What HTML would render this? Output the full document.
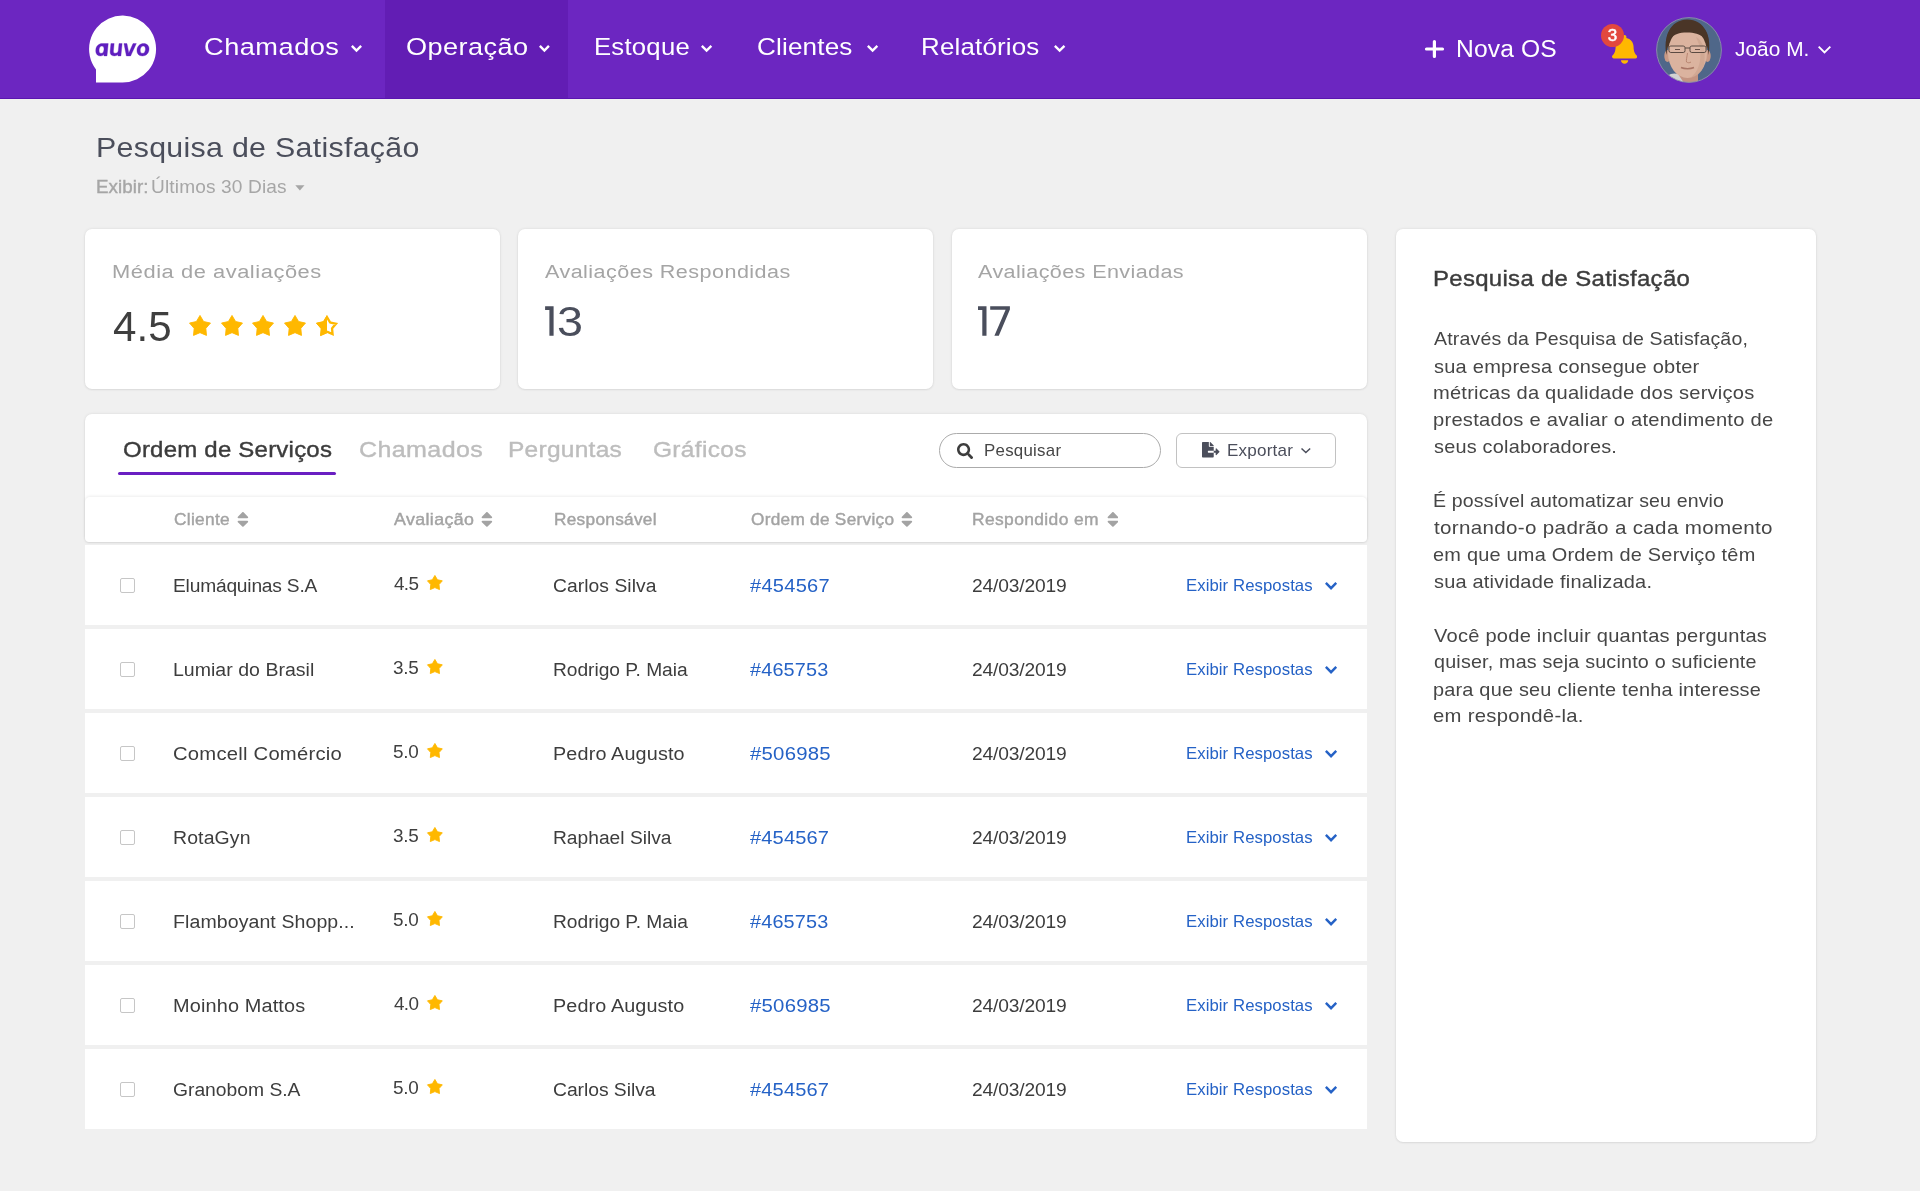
<!DOCTYPE html><html><head><meta charset="utf-8"><title>Pesquisa de Satisfação</title><style>html,body{margin:0;padding:0;width:1920px;height:1191px;overflow:hidden;background:#f0f0f0;}body{position:relative;font-family:"Liberation Sans",sans-serif;}.tx{position:absolute;white-space:nowrap;line-height:normal;will-change:transform;}.box{position:absolute;background:#fff;}</style></head><body><div style="position:absolute;left:0;top:0;width:1920px;height:99px;background:#6c26c1"></div><div style="position:absolute;left:385px;top:0;width:183px;height:99px;background:#621db4"></div><div style="position:absolute;left:0;top:98px;width:1920px;height:1px;background:#5a15b0"></div><svg style="position:absolute;left:80px;top:10px;width:90px;height:80px" viewBox="80 10 90 80"><path fill="#fff" d="M96,69.4 L96,82.5 L122.5,82.5 A33.5,33.5 0 1 0 96,69.4 Z"/><g transform="translate(94 40) matrix(1 0 -0.1 1 1.59 0)" fill="#5f1ebf" fill-rule="evenodd" stroke="#5f1ebf" stroke-width="0.35"><path d="M7,3.6 L13,3.6 L13,15.9 L9.9,15.9 L9.9,14.3 C9.0,15.3 7.9,15.9 6.4,15.9 C3.1,15.9 1.2,13.3 1.2,9.75 C1.2,6.0 3.6,3.6 7,3.6 Z M6.9,6.0 C5.3,6.0 4.45,7.6 4.45,9.65 C4.45,11.8 5.3,13.3 6.9,13.3 C8.5,13.3 9.35,11.8 9.35,9.65 C9.35,7.6 8.5,6.0 6.9,6.0 Z"/><path d="M15.7,3.6 H18.9 V10.9 C18.9,12.5 19.7,13.2 21.1,13.2 C22.8,13.2 23.8,12.0 23.8,10.2 V3.6 H26.9 V15.9 H23.9 V14.5 C23.1,15.4 21.9,15.9 20.3,15.9 C17.3,15.9 15.7,14.2 15.7,11.3 Z"/><path d="M28.7,3.6 H31.7 L34.5,12.9 L37.8,3.6 H41.1 L36.6,15.9 H32.4 Z"/><path d="M48.4,3.6 C52.2,3.6 54.4,6.2 54.4,9.75 C54.4,13.3 52.2,15.9 48.4,15.9 C44.6,15.9 42.4,13.3 42.4,9.75 C42.4,6.2 44.6,3.6 48.4,3.6 Z M48.2,6.0 C46.6,6.0 45.6,7.5 45.6,9.65 C45.6,11.8 46.6,13.3 48.2,13.3 C49.8,13.3 50.8,11.8 50.8,9.65 C50.8,7.5 49.8,6.0 48.2,6.0 Z"/></g></svg><svg style="position:absolute;left:348.00px;top:42.00px;width:17.00px;height:13.20px" viewBox="0 0 17.00 13.20"><polyline points="3.85,3.85 8.50,8.50 13.15,3.85" fill="none" stroke="#fff" stroke-width="2.4" stroke-linecap="butt" stroke-linejoin="miter" stroke-miterlimit="10"/></svg><svg style="position:absolute;left:536.40px;top:42.00px;width:16.80px;height:13.20px" viewBox="0 0 16.80 13.20"><polyline points="3.86,3.84 8.40,8.48 12.94,3.84" fill="none" stroke="#fff" stroke-width="2.4" stroke-linecap="butt" stroke-linejoin="miter" stroke-miterlimit="10"/></svg><svg style="position:absolute;left:697.80px;top:42.00px;width:17.20px;height:13.20px" viewBox="0 0 17.20 13.20"><polyline points="3.84,3.86 8.60,8.52 13.36,3.86" fill="none" stroke="#fff" stroke-width="2.4" stroke-linecap="butt" stroke-linejoin="miter" stroke-miterlimit="10"/></svg><svg style="position:absolute;left:863.90px;top:42.00px;width:17.20px;height:13.20px" viewBox="0 0 17.20 13.20"><polyline points="3.84,3.86 8.60,8.52 13.36,3.86" fill="none" stroke="#fff" stroke-width="2.4" stroke-linecap="butt" stroke-linejoin="miter" stroke-miterlimit="10"/></svg><svg style="position:absolute;left:1050.90px;top:42.00px;width:17.30px;height:13.20px" viewBox="0 0 17.30 13.20"><polyline points="3.84,3.86 8.65,8.53 13.46,3.86" fill="none" stroke="#fff" stroke-width="2.4" stroke-linecap="butt" stroke-linejoin="miter" stroke-miterlimit="10"/></svg><svg style="position:absolute;left:1423px;top:38px;width:23px;height:22px" viewBox="0 0 23 22"><path d="M11.4,3.5 V18.5 M3.5,11 H19.5" stroke="#fff" stroke-width="3.2" stroke-linecap="round"/></svg><svg style="position:absolute;left:1611.90px;top:35.20px;width:25.20px;height:28.80px;" viewBox="0 0 448 512" preserveAspectRatio="none"><path fill="#ffb800" d="M439.39 362.29c-19.32-20.76-55.47-51.99-55.47-154.29 0-77.7-54.48-139.9-127.94-155.16V32c0-17.670-14.32-32-31.98-32s-31.98 14.33-31.98 32v20.84C118.56 68.1 64.08 130.3 64.08 208c0 102.3-36.15 133.53-55.47 154.29-6 6.45-8.66 14.16-8.61 21.71.11 16.4 12.98 32 32.1 32h383.8c19.12 0 32-15.6 32.1-32 .05-7.55-2.61-15.27-8.61-21.71z"/><path fill="#ffb800" d="M224 512c35.32 0 63.97-28.65 63.97-64H160.03c0 35.35 28.65 64 63.97 64z"/></svg><div style="position:absolute;left:1601px;top:24px;width:23px;height:23px;border-radius:50%;background:#e2483e"></div><svg style="position:absolute;left:1655.5px;top:16.5px;width:66px;height:66px" viewBox="0 0 66 66"><defs><clipPath id="av"><circle cx="33" cy="33" r="32.5"/></clipPath></defs><g clip-path="url(#av)"><rect width="66" height="66" fill="#4f6789"/><rect x="21" y="50" width="21" height="18" fill="#c49482"/><path d="M6,66 C10,58 16,55 22,57 L28,66 Z" fill="#d2d2d2"/><path d="M10,58 L17,66 H6 Z" fill="#2c3444"/><ellipse cx="31.5" cy="24" rx="21" ry="20" fill="#4a3527"/><ellipse cx="11.5" cy="39" rx="3.2" ry="6" fill="#c99a86"/><ellipse cx="51.5" cy="39" rx="3.2" ry="6" fill="#c99a86"/><ellipse cx="31.5" cy="36" rx="19.5" ry="25" fill="#dbb39f"/><path d="M40,20 C48,24 50,36 48,48 C46,56 40,60 34,61 C42,56 46,44 44,30 Z" fill="#c9a08c" opacity="0.6"/><path d="M10.5,38 C7,20 14,3 31,2.5 C49,2.5 56,20 52.5,38 C52,31 51,25 48,21 C44,17 38,15.5 31,15.5 C23,15.5 18,17.5 15,21 C12,25 11,31 10.5,38 Z" fill="#4a3527"/><rect x="13" y="29" width="16" height="6.5" rx="1.8" fill="#e2c0ae" fill-opacity="0.35" stroke="#5b4a42" stroke-width="1"/><rect x="34" y="29" width="16" height="6.5" rx="1.8" fill="#e2c0ae" fill-opacity="0.35" stroke="#5b4a42" stroke-width="1"/><path d="M29,31 H34" stroke="#5b4a42" stroke-width="1"/><path d="M19,32.5 H24 M39,32.5 H44" stroke="#6a5048" stroke-width="1.2"/><path d="M31.5,36 C31,40 30,43 30.5,45 C32,46 33.5,46 35,45" stroke="#b88672" stroke-width="1" fill="none"/><path d="M25,50.5 C28.5,52 34.5,52 38,50.5" stroke="#a97565" stroke-width="1.5" fill="none"/></g><circle cx="33" cy="33" r="32.4" fill="none" stroke="#8f8fae" stroke-width="0.9"/></svg><svg style="position:absolute;left:1815.00px;top:42.90px;width:19.00px;height:13.85px" viewBox="0 0 19.00 13.85"><polyline points="3.67,3.67 9.50,9.51 15.33,3.67" fill="none" stroke="#fff" stroke-width="1.9" stroke-linecap="butt" stroke-linejoin="miter" stroke-miterlimit="10"/></svg><svg style="position:absolute;left:295px;top:185px;width:10px;height:6px" viewBox="0 0 10 6"><path d="M0.3,0.2 H9.5 L4.9,5.6 Z" fill="#a6a6a6"/></svg><div class="box" style="left:85px;top:229px;width:415px;height:160px;border-radius:7px;box-shadow:0 0 3px rgba(0,0,0,0.10),0 1px 2px rgba(0,0,0,0.05);"></div><div class="box" style="left:518px;top:229px;width:415px;height:160px;border-radius:7px;box-shadow:0 0 3px rgba(0,0,0,0.10),0 1px 2px rgba(0,0,0,0.05);"></div><div class="box" style="left:952px;top:229px;width:415px;height:160px;border-radius:7px;box-shadow:0 0 3px rgba(0,0,0,0.10),0 1px 2px rgba(0,0,0,0.05);"></div><svg style="position:absolute;left:186.75px;top:313.00px;width:26.00px;height:24.81px" viewBox="0 0 26.00 24.81"><polygon points="13.00,2.45 16.61,8.53 23.50,10.08 18.84,15.39 19.49,22.43 13.00,19.64 6.51,22.43 7.16,15.39 2.50,10.08 9.39,8.53" fill="#ffb800" stroke="#ffb800" stroke-width="0.9" stroke-linejoin="round"/></svg><svg style="position:absolute;left:218.60px;top:313.00px;width:26.00px;height:24.81px" viewBox="0 0 26.00 24.81"><polygon points="13.00,2.45 16.61,8.53 23.50,10.08 18.84,15.39 19.49,22.43 13.00,19.64 6.51,22.43 7.16,15.39 2.50,10.08 9.39,8.53" fill="#ffb800" stroke="#ffb800" stroke-width="0.9" stroke-linejoin="round"/></svg><svg style="position:absolute;left:250.25px;top:313.00px;width:26.00px;height:24.81px" viewBox="0 0 26.00 24.81"><polygon points="13.00,2.45 16.61,8.53 23.50,10.08 18.84,15.39 19.49,22.43 13.00,19.64 6.51,22.43 7.16,15.39 2.50,10.08 9.39,8.53" fill="#ffb800" stroke="#ffb800" stroke-width="0.9" stroke-linejoin="round"/></svg><svg style="position:absolute;left:282.00px;top:313.00px;width:26.00px;height:24.81px" viewBox="0 0 26.00 24.81"><polygon points="13.00,2.45 16.61,8.53 23.50,10.08 18.84,15.39 19.49,22.43 13.00,19.64 6.51,22.43 7.16,15.39 2.50,10.08 9.39,8.53" fill="#ffb800" stroke="#ffb800" stroke-width="0.9" stroke-linejoin="round"/></svg><svg style="position:absolute;left:313.60px;top:313.00px;width:26.20px;height:25.00px" viewBox="0 0 26.20 25.00"><defs><clipPath id="hs3156a"><rect x="0" y="0" width="13.10" height="25.00"/></clipPath><clipPath id="hs3156b"><polygon points="13.55,2.45 17.35,8.84 24.60,10.48 19.70,16.07 20.38,23.47 13.55,20.53 6.72,23.47 7.40,16.07 2.50,10.48 9.75,8.84" transform="translate(-0.45 -0.42)"/></clipPath></defs><polygon points="13.10,2.45 16.74,8.58 23.70,10.15 19.00,15.52 19.65,22.62 13.10,19.80 6.55,22.62 7.20,15.52 2.50,10.15 9.46,8.58" fill="#ffb800" stroke="#ffb800" stroke-width="0.9" stroke-linejoin="round" clip-path="url(#hs3156a)"/><polygon points="13.10,2.45 16.74,8.58 23.70,10.15 19.00,15.52 19.65,22.62 13.10,19.80 6.55,22.62 7.20,15.52 2.50,10.15 9.46,8.58" fill="none" stroke="#ffb800" stroke-width="4.2" stroke-linejoin="round" clip-path="url(#hs3156b)"/></svg><svg style="position:absolute;left:540px;top:300px;width:480px;height:40px" viewBox="540 300 480 40" fill="#4a4e5c"><path d="M545.1,306.2 H553.6 V335.8 H549.4 V309.9 H545.1 Z"/><path d="M978.0,306.2 H986.5 V335.8 H982.3 V309.9 H978.0 Z"/><path d="M990.2,306.2 H1009.9 V309.4 L998.8,335.8 H994.4 L1005.6,309.7 H990.2 Z"/></svg><div class="box" style="left:85px;top:414px;width:1282px;height:128px;border-radius:7px 7px 4px 4px;box-shadow:0 0 3px rgba(0,0,0,0.10),0 1px 2px rgba(0,0,0,0.05);"></div><div class="box" style="left:85px;top:497px;width:1282px;height:45px;border-radius:5px;box-shadow:0 -1px 3px rgba(0,0,0,0.07)"></div><div style="position:absolute;left:118px;top:472px;width:218px;height:3px;border-radius:2px;background:#6a1fc2"></div><div style="position:absolute;left:939px;top:433px;width:220px;height:33px;border:1px solid #ababab;border-radius:18px;background:#fff"></div><svg style="position:absolute;left:956.9px;top:442.5px;width:16.2px;height:16.2px;" viewBox="0 0 512 512" preserveAspectRatio="none"><path fill="#3d3d3d" d="M505 442.7L405.3 343c-4.5-4.5-10.6-7-17-7H372c27.6-35.3 44-79.7 44-128C416 93.1 322.9 0 208 0S0 93.1 0 208s93.1 208 208 208c48.3 0 92.7-16.4 128-44v16.3c0 6.4 2.5 12.5 7 17l99.7 99.7c9.4 9.4 24.6 9.4 33.9 0l28.3-28.3c9.4-9.4 9.4-24.6.1-34zM208 336c-70.7 0-128-57.2-128-128 0-70.7 57.2-128 128-128 70.7 0 128 57.2 128 128 0 70.7-57.2 128-128 128z"/></svg><div style="position:absolute;left:1176px;top:433px;width:158px;height:33px;border:1px solid #c2c2c2;border-radius:6px;background:#fff"></div><svg style="position:absolute;left:1202px;top:442.2px;width:17.6px;height:15.6px;" viewBox="0 0 576 512" preserveAspectRatio="none"><path fill="#4b4e5b" d="M384 121.9c0-6.3-2.5-12.4-7-16.9L279.1 7c-4.5-4.5-10.6-7-17-7H256v128h128zM571 308l-95.7-96.4c-10.1-10.1-27.4-3-27.4 11.3V288h-64v64h64v65.2c0 14.3 17.3 21.4 27.4 11.3L571 332c6.6-6.6 6.6-17.4 0-24zm-379 28v-32c0-8.8 7.2-16 16-16h176V160H248c-13.2 0-24-10.8-24-24V0H24C10.7 0 0 10.7 0 24v464c0 13.3 10.7 24 24 24h336c13.3 0 24-10.7 24-24V352H208c-8.8 0-16-7.2-16-16z"/></svg><svg style="position:absolute;left:1298.10px;top:445.40px;width:15.70px;height:11.60px" viewBox="0 0 15.70 11.60"><polyline points="3.51,3.55 7.85,7.58 12.19,3.55" fill="none" stroke="#4b4e5b" stroke-width="1.5" stroke-linecap="butt" stroke-linejoin="miter" stroke-miterlimit="10"/></svg><svg style="position:absolute;left:237.27px;top:509.79px;width:11.82px;height:18.91px;" viewBox="0 0 320 512" preserveAspectRatio="none"><path fill="#a3a3a3" d="M41 288h238c21.4 0 32.1 25.9 17 41L177 448c-9.4 9.4-24.6 9.4-33.9 0L24 329c-15.1-15.1-4.4-41 17-41zm255-105L177 64c-9.4-9.4-24.6-9.4-33.9 0L24 183c-15.1 15.1-4.4 41 17 41h238c21.4 0 32.1-25.9 17-41z"/></svg><svg style="position:absolute;left:481.37px;top:509.79px;width:11.82px;height:18.91px;" viewBox="0 0 320 512" preserveAspectRatio="none"><path fill="#a3a3a3" d="M41 288h238c21.4 0 32.1 25.9 17 41L177 448c-9.4 9.4-24.6 9.4-33.9 0L24 329c-15.1-15.1-4.4-41 17-41zm255-105L177 64c-9.4-9.4-24.6-9.4-33.9 0L24 183c-15.1 15.1-4.4 41 17 41h238c21.4 0 32.1-25.9 17-41z"/></svg><svg style="position:absolute;left:901.27px;top:509.79px;width:11.82px;height:18.91px;" viewBox="0 0 320 512" preserveAspectRatio="none"><path fill="#a3a3a3" d="M41 288h238c21.4 0 32.1 25.9 17 41L177 448c-9.4 9.4-24.6 9.4-33.9 0L24 329c-15.1-15.1-4.4-41 17-41zm255-105L177 64c-9.4-9.4-24.6-9.4-33.9 0L24 183c-15.1 15.1-4.4 41 17 41h238c21.4 0 32.1-25.9 17-41z"/></svg><svg style="position:absolute;left:1106.67px;top:509.79px;width:11.82px;height:18.91px;" viewBox="0 0 320 512" preserveAspectRatio="none"><path fill="#a3a3a3" d="M41 288h238c21.4 0 32.1 25.9 17 41L177 448c-9.4 9.4-24.6 9.4-33.9 0L24 329c-15.1-15.1-4.4-41 17-41zm255-105L177 64c-9.4-9.4-24.6-9.4-33.9 0L24 183c-15.1 15.1-4.4 41 17 41h238c21.4 0 32.1-25.9 17-41z"/></svg><div class="box" style="left:85px;top:545px;width:1282px;height:80px"></div><div style="position:absolute;left:120px;top:577.5px;width:13px;height:13px;border:1px solid #c6c6c6;border-radius:2px;background:#fff"></div><svg style="position:absolute;left:424.70px;top:573.00px;width:19.80px;height:18.95px" viewBox="0 0 19.80 18.95"><polygon points="9.90,2.45 12.45,6.74 17.32,7.84 14.03,11.60 14.49,16.57 9.90,14.60 5.31,16.57 5.77,11.60 2.48,7.84 7.35,6.74" fill="#ffb800" stroke="#ffb800" stroke-width="0.9" stroke-linejoin="round"/></svg><svg style="position:absolute;left:1321.60px;top:578.90px;width:18.10px;height:13.90px" viewBox="0 0 18.10 13.90"><polyline points="3.86,3.84 9.05,9.18 14.24,3.84" fill="none" stroke="#2562c6" stroke-width="2.4" stroke-linecap="butt" stroke-linejoin="miter" stroke-miterlimit="10"/></svg><div class="box" style="left:85px;top:629px;width:1282px;height:80px"></div><div style="position:absolute;left:120px;top:661.5px;width:13px;height:13px;border:1px solid #c6c6c6;border-radius:2px;background:#fff"></div><svg style="position:absolute;left:424.70px;top:657.00px;width:19.80px;height:18.95px" viewBox="0 0 19.80 18.95"><polygon points="9.90,2.45 12.45,6.74 17.32,7.84 14.03,11.60 14.49,16.57 9.90,14.60 5.31,16.57 5.77,11.60 2.48,7.84 7.35,6.74" fill="#ffb800" stroke="#ffb800" stroke-width="0.9" stroke-linejoin="round"/></svg><svg style="position:absolute;left:1321.60px;top:662.90px;width:18.10px;height:13.90px" viewBox="0 0 18.10 13.90"><polyline points="3.86,3.84 9.05,9.18 14.24,3.84" fill="none" stroke="#2562c6" stroke-width="2.4" stroke-linecap="butt" stroke-linejoin="miter" stroke-miterlimit="10"/></svg><div class="box" style="left:85px;top:713px;width:1282px;height:80px"></div><div style="position:absolute;left:120px;top:745.5px;width:13px;height:13px;border:1px solid #c6c6c6;border-radius:2px;background:#fff"></div><svg style="position:absolute;left:424.70px;top:741.00px;width:19.80px;height:18.95px" viewBox="0 0 19.80 18.95"><polygon points="9.90,2.45 12.45,6.74 17.32,7.84 14.03,11.60 14.49,16.57 9.90,14.60 5.31,16.57 5.77,11.60 2.48,7.84 7.35,6.74" fill="#ffb800" stroke="#ffb800" stroke-width="0.9" stroke-linejoin="round"/></svg><svg style="position:absolute;left:1321.60px;top:746.90px;width:18.10px;height:13.90px" viewBox="0 0 18.10 13.90"><polyline points="3.86,3.84 9.05,9.18 14.24,3.84" fill="none" stroke="#2562c6" stroke-width="2.4" stroke-linecap="butt" stroke-linejoin="miter" stroke-miterlimit="10"/></svg><div class="box" style="left:85px;top:797px;width:1282px;height:80px"></div><div style="position:absolute;left:120px;top:829.5px;width:13px;height:13px;border:1px solid #c6c6c6;border-radius:2px;background:#fff"></div><svg style="position:absolute;left:424.70px;top:825.00px;width:19.80px;height:18.95px" viewBox="0 0 19.80 18.95"><polygon points="9.90,2.45 12.45,6.74 17.32,7.84 14.03,11.60 14.49,16.57 9.90,14.60 5.31,16.57 5.77,11.60 2.48,7.84 7.35,6.74" fill="#ffb800" stroke="#ffb800" stroke-width="0.9" stroke-linejoin="round"/></svg><svg style="position:absolute;left:1321.60px;top:830.90px;width:18.10px;height:13.90px" viewBox="0 0 18.10 13.90"><polyline points="3.86,3.84 9.05,9.18 14.24,3.84" fill="none" stroke="#2562c6" stroke-width="2.4" stroke-linecap="butt" stroke-linejoin="miter" stroke-miterlimit="10"/></svg><div class="box" style="left:85px;top:881px;width:1282px;height:80px"></div><div style="position:absolute;left:120px;top:913.5px;width:13px;height:13px;border:1px solid #c6c6c6;border-radius:2px;background:#fff"></div><svg style="position:absolute;left:424.70px;top:909.00px;width:19.80px;height:18.95px" viewBox="0 0 19.80 18.95"><polygon points="9.90,2.45 12.45,6.74 17.32,7.84 14.03,11.60 14.49,16.57 9.90,14.60 5.31,16.57 5.77,11.60 2.48,7.84 7.35,6.74" fill="#ffb800" stroke="#ffb800" stroke-width="0.9" stroke-linejoin="round"/></svg><svg style="position:absolute;left:1321.60px;top:914.90px;width:18.10px;height:13.90px" viewBox="0 0 18.10 13.90"><polyline points="3.86,3.84 9.05,9.18 14.24,3.84" fill="none" stroke="#2562c6" stroke-width="2.4" stroke-linecap="butt" stroke-linejoin="miter" stroke-miterlimit="10"/></svg><div class="box" style="left:85px;top:965px;width:1282px;height:80px"></div><div style="position:absolute;left:120px;top:997.5px;width:13px;height:13px;border:1px solid #c6c6c6;border-radius:2px;background:#fff"></div><svg style="position:absolute;left:424.70px;top:993.00px;width:19.80px;height:18.95px" viewBox="0 0 19.80 18.95"><polygon points="9.90,2.45 12.45,6.74 17.32,7.84 14.03,11.60 14.49,16.57 9.90,14.60 5.31,16.57 5.77,11.60 2.48,7.84 7.35,6.74" fill="#ffb800" stroke="#ffb800" stroke-width="0.9" stroke-linejoin="round"/></svg><svg style="position:absolute;left:1321.60px;top:998.90px;width:18.10px;height:13.90px" viewBox="0 0 18.10 13.90"><polyline points="3.86,3.84 9.05,9.18 14.24,3.84" fill="none" stroke="#2562c6" stroke-width="2.4" stroke-linecap="butt" stroke-linejoin="miter" stroke-miterlimit="10"/></svg><div class="box" style="left:85px;top:1049px;width:1282px;height:80px"></div><div style="position:absolute;left:120px;top:1081.5px;width:13px;height:13px;border:1px solid #c6c6c6;border-radius:2px;background:#fff"></div><svg style="position:absolute;left:424.70px;top:1077.00px;width:19.80px;height:18.95px" viewBox="0 0 19.80 18.95"><polygon points="9.90,2.45 12.45,6.74 17.32,7.84 14.03,11.60 14.49,16.57 9.90,14.60 5.31,16.57 5.77,11.60 2.48,7.84 7.35,6.74" fill="#ffb800" stroke="#ffb800" stroke-width="0.9" stroke-linejoin="round"/></svg><svg style="position:absolute;left:1321.60px;top:1082.90px;width:18.10px;height:13.90px" viewBox="0 0 18.10 13.90"><polyline points="3.86,3.84 9.05,9.18 14.24,3.84" fill="none" stroke="#2562c6" stroke-width="2.4" stroke-linecap="butt" stroke-linejoin="miter" stroke-miterlimit="10"/></svg><div class="box" style="left:1396px;top:229px;width:420px;height:913px;border-radius:7px;box-shadow:0 0 3px rgba(0,0,0,0.10),0 1px 2px rgba(0,0,0,0.05);"></div><div class="tx" id="nav1" style="left:204.20px;top:33.01px;font-size:24.71px;letter-spacing:0.458px;color:#ffffff;transform:scaleX(1.1001859673453929);transform-origin:0 0;">Chamados</div><div class="tx" id="nav2" style="left:405.80px;top:33.01px;font-size:24.71px;letter-spacing:0.387px;color:#ffffff;transform:scaleX(1.0977071391349789);transform-origin:0 0;">Operação</div><div class="tx" id="nav3" style="left:593.80px;top:33.01px;font-size:24.71px;letter-spacing:0.247px;color:#ffffff;transform:scaleX(1.0387844190731919);transform-origin:0 0;">Estoque</div><div class="tx" id="nav4" style="left:757.40px;top:33.01px;font-size:24.71px;letter-spacing:0.165px;color:#ffffff;transform:scaleX(1.0553491513974325);transform-origin:0 0;">Clientes</div><div class="tx" id="nav5" style="left:921.40px;top:33.01px;font-size:24.71px;letter-spacing:0.175px;color:#ffffff;transform:scaleX(1.0485310715140879);transform-origin:0 0;">Relatórios</div><div class="tx" id="novaos" style="left:1456.20px;top:34.91px;font-size:24.42px;letter-spacing:0.130px;color:#ffffff;transform:scaleX(1.0089371516432828);transform-origin:0 0;">Nova OS</div><div class="tx" id="joao" style="left:1735.20px;top:37.90px;font-size:20.06px;letter-spacing:0.042px;color:#ffffff;transform:scaleX(1.0393239047947713);transform-origin:0 0;">João M.</div><div class="tx" id="badge3" style="left:1601px;top:24px;width:23px;height:23px;line-height:23px;text-align:center;font-size:17px;-webkit-text-stroke:0.5px #fff;color:#fff">3</div><div class="tx" id="title" style="left:95.70px;top:130.81px;font-size:28.49px;letter-spacing:0.292px;color:#4b4e5b;transform:scaleX(1.0642491403328231);transform-origin:0 0;">Pesquisa de Satisfação</div><div class="tx" id="exibir" style="left:95.80px;top:175.81px;font-size:18.31px;letter-spacing:0.066px;color:#a6a6a6;-webkit-text-stroke:0.4px #a6a6a6;transform:scaleX(1.0252679938744194);transform-origin:0 0;">Exibir:</div><div class="tx" id="ultimos" style="left:151.00px;top:175.81px;font-size:18.31px;letter-spacing:0.132px;color:#a6a6a6;transform:scaleX(1.0434776237507672);transform-origin:0 0;">Últimos 30 Dias</div><div class="tx" id="c1lab" style="left:111.50px;top:260.91px;font-size:19.19px;letter-spacing:0.480px;color:#a5a5a5;transform:scaleX(1.1398135818908122);transform-origin:0 0;">Média de avaliações</div><div class="tx" id="c2lab" style="left:544.80px;top:260.91px;font-size:19.19px;letter-spacing:0.404px;color:#a5a5a5;transform:scaleX(1.123593918310401);transform-origin:0 0;">Avaliações Respondidas</div><div class="tx" id="c3lab" style="left:978.40px;top:260.91px;font-size:19.19px;letter-spacing:0.344px;color:#a5a5a5;transform:scaleX(1.1239442256250363);transform-origin:0 0;">Avaliações Enviadas</div><div class="tx" id="c1val" style="left:113.00px;top:302.60px;font-size:42.15px;letter-spacing:0.000px;color:#3f3f3f;">4.5</div><div class="tx" id="c2val" style="left:557.00px;top:297.00px;font-size:43.31px;letter-spacing:0.000px;color:#4a4e5c;transform:scaleX(1.08);transform-origin:0 0;">3</div><div class="tx" id="tab1" style="left:122.50px;top:436.10px;font-size:22.97px;letter-spacing:0.195px;color:#3c3c3c;-webkit-text-stroke:0.4px #3c3c3c;transform:scaleX(1.0462783324658118);transform-origin:0 0;">Ordem de Serviços</div><div class="tx" id="tab2" style="left:359.40px;top:436.10px;font-size:22.97px;letter-spacing:0.364px;color:#bdbdbd;-webkit-text-stroke:0.4px #bdbdbd;transform:scaleX(1.089893346876587);transform-origin:0 0;">Chamados</div><div class="tx" id="tab3" style="left:508.00px;top:436.10px;font-size:22.97px;letter-spacing:0.239px;color:#bdbdbd;-webkit-text-stroke:0.4px #bdbdbd;transform:scaleX(1.0671986941144465);transform-origin:0 0;">Perguntas</div><div class="tx" id="tab4" style="left:652.50px;top:436.10px;font-size:22.97px;letter-spacing:0.311px;color:#bdbdbd;-webkit-text-stroke:0.4px #bdbdbd;transform:scaleX(1.064629588920642);transform-origin:0 0;">Gráficos</div><div class="tx" id="pesq" style="left:984.40px;top:441.91px;font-size:15.99px;letter-spacing:0.237px;color:#464646;transform:scaleX(1.0552470267721414);transform-origin:0 0;">Pesquisar</div><div class="tx" id="export" style="left:1227.20px;top:441.76px;font-size:15.99px;letter-spacing:0.193px;color:#4b4e5b;transform:scaleX(1.0677860308345473);transform-origin:0 0;">Exportar</div><div class="tx" id="h1" style="left:174.00px;top:510.91px;font-size:15.70px;letter-spacing:0.283px;color:#a3a3a3;-webkit-text-stroke:0.4px #a3a3a3;transform:scaleX(1.1029881386861342);transform-origin:0 0;">Cliente</div><div class="tx" id="h2" style="left:394.00px;top:510.91px;font-size:15.70px;letter-spacing:0.343px;color:#a3a3a3;-webkit-text-stroke:0.4px #a3a3a3;transform:scaleX(1.1333260357944241);transform-origin:0 0;">Avaliação</div><div class="tx" id="h3" style="left:554.20px;top:510.91px;font-size:15.70px;letter-spacing:0.273px;color:#a3a3a3;-webkit-text-stroke:0.4px #a3a3a3;transform:scaleX(1.0975021819542121);transform-origin:0 0;">Responsável</div><div class="tx" id="h4" style="left:751.40px;top:510.91px;font-size:15.70px;letter-spacing:0.260px;color:#a3a3a3;-webkit-text-stroke:0.4px #a3a3a3;transform:scaleX(1.0970712649080503);transform-origin:0 0;">Ordem de Serviço</div><div class="tx" id="h5" style="left:972.40px;top:510.91px;font-size:15.70px;letter-spacing:0.337px;color:#a3a3a3;-webkit-text-stroke:0.4px #a3a3a3;transform:scaleX(1.1103054086333137);transform-origin:0 0;">Respondido em</div><div class="tx" id="r0name" style="left:172.80px;top:575.31px;font-size:19.19px;letter-spacing:-0.201px;color:#3d3d3d;">Elumáquinas S.A</div><div class="tx" id="r0rate" style="left:393.80px;top:573.30px;font-size:18.90px;letter-spacing:-0.676px;color:#404040;">4.5</div><div class="tx" id="r0resp" style="left:552.80px;top:575.01px;font-size:19.19px;letter-spacing:0.059px;color:#3d3d3d;transform:scaleX(1.0043612574959113);transform-origin:0 0;">Carlos Silva</div><div class="tx" id="r0os" style="left:749.80px;top:575.10px;font-size:19.19px;letter-spacing:0.244px;color:#2562c6;transform:scaleX(1.0457016056646915);transform-origin:0 0;">#454567</div><div class="tx" id="r0date" style="left:971.60px;top:575.10px;font-size:19.19px;letter-spacing:-0.146px;color:#3d3d3d;">24/03/2019</div><div class="tx" id="r0exib" style="left:1185.80px;top:575.81px;font-size:16.28px;letter-spacing:0.054px;color:#2562c6;transform:scaleX(1.0306688015765573);transform-origin:0 0;">Exibir Respostas</div><div class="tx" id="r1name" style="left:172.80px;top:659.31px;font-size:19.19px;letter-spacing:0.018px;color:#3d3d3d;transform:scaleX(1.0171079429735235);transform-origin:0 0;">Lumiar do Brasil</div><div class="tx" id="r1rate" style="left:392.80px;top:657.30px;font-size:18.90px;letter-spacing:-0.213px;color:#404040;">3.5</div><div class="tx" id="r1resp" style="left:552.80px;top:659.01px;font-size:19.19px;letter-spacing:-0.032px;color:#3d3d3d;">Rodrigo P. Maia</div><div class="tx" id="r1os" style="left:749.80px;top:659.10px;font-size:19.19px;letter-spacing:0.140px;color:#2562c6;transform:scaleX(1.0350397614314093);transform-origin:0 0;">#465753</div><div class="tx" id="r1date" style="left:971.60px;top:659.10px;font-size:19.19px;letter-spacing:-0.146px;color:#3d3d3d;">24/03/2019</div><div class="tx" id="r1exib" style="left:1185.80px;top:659.81px;font-size:16.28px;letter-spacing:0.054px;color:#2562c6;transform:scaleX(1.0306688015765573);transform-origin:0 0;">Exibir Respostas</div><div class="tx" id="r2name" style="left:172.80px;top:743.31px;font-size:19.19px;letter-spacing:0.207px;color:#3d3d3d;transform:scaleX(1.0556721686861958);transform-origin:0 0;">Comcell Comércio</div><div class="tx" id="r2rate" style="left:392.80px;top:741.30px;font-size:18.90px;letter-spacing:-0.213px;color:#404040;">5.0</div><div class="tx" id="r2resp" style="left:552.80px;top:743.01px;font-size:19.19px;letter-spacing:0.144px;color:#3d3d3d;transform:scaleX(1.0310498883097543);transform-origin:0 0;">Pedro Augusto</div><div class="tx" id="r2os" style="left:749.80px;top:743.10px;font-size:19.19px;letter-spacing:0.221px;color:#2562c6;transform:scaleX(1.0608482098334355);transform-origin:0 0;">#506985</div><div class="tx" id="r2date" style="left:971.60px;top:743.10px;font-size:19.19px;letter-spacing:-0.146px;color:#3d3d3d;">24/03/2019</div><div class="tx" id="r2exib" style="left:1185.80px;top:743.81px;font-size:16.28px;letter-spacing:0.054px;color:#2562c6;transform:scaleX(1.0306688015765573);transform-origin:0 0;">Exibir Respostas</div><div class="tx" id="r3name" style="left:172.80px;top:827.31px;font-size:19.19px;letter-spacing:0.109px;color:#3d3d3d;transform:scaleX(1.0148619423628291);transform-origin:0 0;">RotaGyn</div><div class="tx" id="r3rate" style="left:392.80px;top:825.30px;font-size:18.90px;letter-spacing:-0.213px;color:#404040;">3.5</div><div class="tx" id="r3resp" style="left:552.80px;top:827.01px;font-size:19.19px;letter-spacing:0.009px;color:#3d3d3d;">Raphael Silva</div><div class="tx" id="r3os" style="left:749.80px;top:827.10px;font-size:19.19px;letter-spacing:0.147px;color:#2562c6;transform:scaleX(1.0455067972810623);transform-origin:0 0;">#454567</div><div class="tx" id="r3date" style="left:971.60px;top:827.10px;font-size:19.19px;letter-spacing:-0.146px;color:#3d3d3d;">24/03/2019</div><div class="tx" id="r3exib" style="left:1185.80px;top:827.81px;font-size:16.28px;letter-spacing:0.054px;color:#2562c6;transform:scaleX(1.0306688015765573);transform-origin:0 0;">Exibir Respostas</div><div class="tx" id="r4name" style="left:172.80px;top:911.31px;font-size:19.19px;letter-spacing:0.088px;color:#3d3d3d;transform:scaleX(1.0173457550931624);transform-origin:0 0;">Flamboyant Shopp...</div><div class="tx" id="r4rate" style="left:392.80px;top:909.30px;font-size:18.90px;letter-spacing:-0.213px;color:#404040;">5.0</div><div class="tx" id="r4resp" style="left:552.80px;top:911.01px;font-size:19.19px;letter-spacing:-0.021px;color:#3d3d3d;">Rodrigo P. Maia</div><div class="tx" id="r4os" style="left:749.80px;top:911.10px;font-size:19.19px;letter-spacing:0.140px;color:#2562c6;transform:scaleX(1.0350397614314093);transform-origin:0 0;">#465753</div><div class="tx" id="r4date" style="left:971.60px;top:911.10px;font-size:19.19px;letter-spacing:-0.146px;color:#3d3d3d;">24/03/2019</div><div class="tx" id="r4exib" style="left:1185.80px;top:911.81px;font-size:16.28px;letter-spacing:0.054px;color:#2562c6;transform:scaleX(1.0306688015765573);transform-origin:0 0;">Exibir Respostas</div><div class="tx" id="r5name" style="left:172.80px;top:995.31px;font-size:19.19px;letter-spacing:0.132px;color:#3d3d3d;transform:scaleX(1.0372590637907284);transform-origin:0 0;">Moinho Mattos</div><div class="tx" id="r5rate" style="left:393.80px;top:993.30px;font-size:18.90px;letter-spacing:-0.676px;color:#404040;">4.0</div><div class="tx" id="r5resp" style="left:552.80px;top:995.01px;font-size:19.19px;letter-spacing:0.113px;color:#3d3d3d;transform:scaleX(1.0313865839409642);transform-origin:0 0;">Pedro Augusto</div><div class="tx" id="r5os" style="left:749.80px;top:995.10px;font-size:19.19px;letter-spacing:0.221px;color:#2562c6;transform:scaleX(1.0608482098334355);transform-origin:0 0;">#506985</div><div class="tx" id="r5date" style="left:971.60px;top:995.10px;font-size:19.19px;letter-spacing:-0.146px;color:#3d3d3d;">24/03/2019</div><div class="tx" id="r5exib" style="left:1185.80px;top:995.81px;font-size:16.28px;letter-spacing:0.054px;color:#2562c6;transform:scaleX(1.0306688015765573);transform-origin:0 0;">Exibir Respostas</div><div class="tx" id="r6name" style="left:172.80px;top:1079.31px;font-size:19.19px;letter-spacing:-0.015px;color:#3d3d3d;transform:scaleX(1.005692653302429);transform-origin:0 0;">Granobom S.A</div><div class="tx" id="r6rate" style="left:392.80px;top:1077.30px;font-size:18.90px;letter-spacing:-0.213px;color:#404040;">5.0</div><div class="tx" id="r6resp" style="left:552.80px;top:1079.01px;font-size:19.19px;letter-spacing:-0.050px;color:#3d3d3d;transform:scaleX(1.0074241151331371);transform-origin:0 0;">Carlos Silva</div><div class="tx" id="r6os" style="left:749.80px;top:1079.10px;font-size:19.19px;letter-spacing:0.147px;color:#2562c6;transform:scaleX(1.0455067972810623);transform-origin:0 0;">#454567</div><div class="tx" id="r6date" style="left:971.60px;top:1079.10px;font-size:19.19px;letter-spacing:-0.146px;color:#3d3d3d;">24/03/2019</div><div class="tx" id="r6exib" style="left:1185.80px;top:1079.81px;font-size:16.28px;letter-spacing:0.054px;color:#2562c6;transform:scaleX(1.0306688015765573);transform-origin:0 0;">Exibir Respostas</div><div class="tx" id="ptitle" style="left:1432.60px;top:265.70px;font-size:22.09px;letter-spacing:0.285px;color:#3c3c3c;-webkit-text-stroke:0.4px #3c3c3c;transform:scaleX(1.0850177878395861);transform-origin:0 0;">Pesquisa de Satisfação</div><div class="tx" id="p0" style="left:1433.60px;top:328.32px;font-size:18.60px;letter-spacing:0.159px;color:#464646;transform:scaleX(1.0504013369457739);transform-origin:0 0;">Através da Pesquisa de Satisfação,</div><div class="tx" id="p1" style="left:1433.60px;top:355.51px;font-size:18.60px;letter-spacing:0.228px;color:#464646;transform:scaleX(1.0757716630423837);transform-origin:0 0;">sua empresa consegue obter</div><div class="tx" id="p2" style="left:1432.60px;top:382.32px;font-size:18.60px;letter-spacing:0.200px;color:#464646;transform:scaleX(1.0815298962195097);transform-origin:0 0;">métricas da qualidade dos serviços</div><div class="tx" id="p3" style="left:1432.60px;top:409.01px;font-size:18.60px;letter-spacing:0.235px;color:#464646;transform:scaleX(1.0825286937511387);transform-origin:0 0;">prestados e avaliar o atendimento de</div><div class="tx" id="p4" style="left:1433.60px;top:435.82px;font-size:18.60px;letter-spacing:0.199px;color:#464646;transform:scaleX(1.0692333482342422);transform-origin:0 0;">seus colaboradores.</div><div class="tx" id="p5" style="left:1432.60px;top:489.90px;font-size:18.60px;letter-spacing:0.133px;color:#464646;transform:scaleX(1.0501855692609903);transform-origin:0 0;">É possível automatizar seu envio</div><div class="tx" id="p6" style="left:1433.60px;top:517.01px;font-size:18.60px;letter-spacing:0.299px;color:#464646;transform:scaleX(1.106176735798009);transform-origin:0 0;">tornando-o padrão a cada momento</div><div class="tx" id="p7" style="left:1432.60px;top:543.82px;font-size:18.60px;letter-spacing:0.210px;color:#464646;transform:scaleX(1.0711882415441756);transform-origin:0 0;">em que uma Ordem de Serviço têm</div><div class="tx" id="p8" style="left:1433.60px;top:571.01px;font-size:18.60px;letter-spacing:0.182px;color:#464646;transform:scaleX(1.0746502970594765);transform-origin:0 0;">sua atividade finalizada.</div><div class="tx" id="p9" style="left:1433.60px;top:624.61px;font-size:18.60px;letter-spacing:0.214px;color:#464646;transform:scaleX(1.0804952033342305);transform-origin:0 0;">Você pode incluir quantas perguntas</div><div class="tx" id="p10" style="left:1433.60px;top:651.32px;font-size:18.60px;letter-spacing:0.178px;color:#464646;transform:scaleX(1.0605242196445392);transform-origin:0 0;">quiser, mas seja sucinto o suficiente</div><div class="tx" id="p11" style="left:1432.60px;top:678.61px;font-size:18.60px;letter-spacing:0.183px;color:#464646;transform:scaleX(1.07077614237136);transform-origin:0 0;">para que seu cliente tenha interesse</div><div class="tx" id="p12" style="left:1432.60px;top:705.40px;font-size:18.60px;letter-spacing:0.260px;color:#464646;transform:scaleX(1.0899663677130045);transform-origin:0 0;">em respondê-la.</div></body></html>
